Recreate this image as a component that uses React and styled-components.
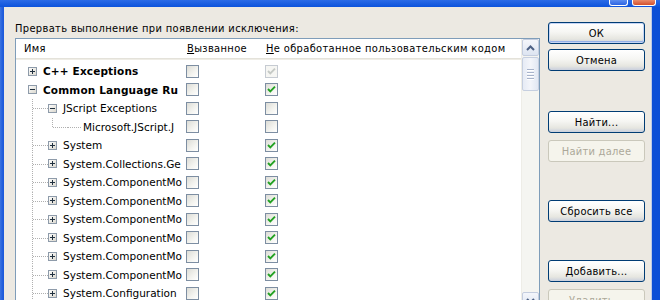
import React from 'react';
import styled, { createGlobalStyle } from 'styled-components';

const Global = createGlobalStyle`
  html, body { margin: 0; padding: 0; background: #ffffff; }
  body { font-family: "DejaVu Sans Condensed", "DejaVu Sans", sans-serif; }
`;

const Frame = styled.div`
  width: 660px;
  height: 300px;
  overflow: hidden;
  display: flex;
  flex-direction: column;
  background: linear-gradient(90deg, #3D74E0 0px, #1E5BDB 3px, #0D4FD6 100%);
`;

const TitleBar = styled.div`
  height: 7px;
  flex: none;
  display: flex;
  justify-content: flex-end;
  align-items: flex-start;
  gap: 4px;
  padding-right: 4px;
  background: linear-gradient(#2C6BE6, #0C53DC);
`;

const TitleButton = styled.div`
  width: ${(p) => p.$w}px;
  height: 5px;
  border: 1px solid #ffffff;
  border-top: none;
  border-radius: 0 0 3px 3px;
  background: ${(p) => p.$bg};
`;

const Body = styled.div`
  flex: 1;
  min-height: 0;
  display: flex;
  gap: 8px;
  margin: 0 8px 0 4px;
  padding: 15px 7px 0 11px;
  background: #ECE9E2;
  overflow: hidden;
  border-right: 1px solid #BFCBE6;
`;

const LeftColumn = styled.div`
  width: 525px;
  flex: none;
  display: flex;
  flex-direction: column;
`;

const Caption = styled.div`
  font-size: 11px;
  line-height: 13px;
  height: 13px;
  letter-spacing: 0.35px;
  color: #000;
  white-space: nowrap;
`;

const ListBox = styled.div`
  margin-top: 3px;
  height: 272px;
  flex: none;
  box-sizing: border-box;
  border: 1px solid #7F9DB9;
  background: #ffffff;
  display: flex;
  overflow: hidden;
`;

const ListMain = styled.div`
  flex: 1;
  min-width: 0;
  display: flex;
  flex-direction: column;
`;

const Header = styled.div`
  height: 19px;
  flex: none;
  display: flex;
  align-items: center;
  background: #ffffff;
  border-bottom: 1px solid #E4E2DA;
  box-shadow: 0 1px 0 #EFEDE6;
  margin-bottom: 3px;
  font-size: 11px;
  letter-spacing: 0.35px;
  color: #000;
`;

const HeadCell = styled.div`
  width: ${(p) => (p.$w ? `${p.$w}px` : 'auto')};
  flex: ${(p) => (p.$w ? 'none' : '1')};
  padding-left: ${(p) => p.$pad}px;
  box-sizing: border-box;
  white-space: nowrap;
  overflow: hidden;
`;

const Row = styled.div`
  height: 18.5px;
  flex: none;
  display: flex;
  align-items: center;
`;

const NameCell = styled.div`
  width: 167px;
  flex: none;
  height: 100%;
  display: flex;
  align-items: center;
  padding-left: 12px;
  box-sizing: border-box;
  overflow: hidden;
`;

const Gutter = styled.svg`
  width: ${(p) => p.$w}px;
  height: 100%;
  flex: none;
  overflow: visible;
`;

const NameText = styled.span`
  font-family: "DejaVu Sans", sans-serif;
  font-size: 10.5px;
  font-weight: ${(p) => (p.$bold ? 700 : 400)};
  letter-spacing: ${(p) => (p.$bold ? '0.15px' : '0px')};
  color: #000;
  white-space: nowrap;
`;

const CheckCell = styled.div`
  width: ${(p) => (p.$w ? `${p.$w}px` : 'auto')};
  flex: ${(p) => (p.$w ? 'none' : '1')};
  padding-left: 3px;
  box-sizing: border-box;
  display: flex;
  align-items: center;
`;

const CheckBox = styled.span`
  width: 13px;
  height: 13px;
  box-sizing: border-box;
  border: 1px solid ${(p) => (p.$dim ? '#C6CBD2' : '#7D8EA2')};
  background: ${(p) => (p.$dim ? '#F6F6F3' : 'linear-gradient(135deg, #DCDCD6 0%, #F4F4F0 60%, #FFFFFF 100%)')};
  display: flex;
  align-items: center;
  justify-content: center;
`;

const ScrollBar = styled.div`
  width: 17px;
  flex: none;
  display: flex;
  flex-direction: column;
  background: #F5F5F1;
  border-left: 1px solid #EEEDE7;
`;

const ScrollButton = styled.div`
  height: 17px;
  flex: none;
  box-sizing: border-box;
  border: 1px solid #C4CDDF;
  border-radius: 2px;
  background: linear-gradient(180deg, #F4F6FB 0%, #DDE4F1 100%);
  display: flex;
  align-items: center;
  justify-content: center;
`;

const Thumb = styled.div`
  height: 34px;
  margin-top: 1px;
  flex: none;
  box-sizing: border-box;
  border: 1px solid #C6CFE0;
  border-radius: 2px;
  background: linear-gradient(90deg, #E6EBF5 0%, #F3F5FA 50%, #E2E8F3 100%);
  display: flex;
  flex-direction: column;
  align-items: center;
  justify-content: center;
  gap: 2px;
`;

const Grip = styled.span`
  width: 7px;
  height: 1px;
  background: #A7B3CB;
  box-shadow: 0 1px 0 #FFFFFF;
`;

const Track = styled.div`
  flex: 1;
`;

const RightColumn = styled.div`
  width: 97px;
  flex: none;
  display: flex;
  flex-direction: column;
`;

const ButtonGroup = styled.div`
  display: flex;
  flex-direction: column;
  gap: ${(p) => p.$gap}px;
  margin-top: ${(p) => p.$top}px;
`;

const Button = styled.div`
  height: 22px;
  box-sizing: border-box;
  border: 1px solid ${(p) => (p.$disabled ? '#CAC8BB' : '#003C74')};
  border-radius: 3px;
  background: ${(p) =>
    p.$disabled
      ? '#F5F4EC'
      : 'linear-gradient(180deg, #FFFFFF 0%, #F6F6F3 45%, #E6E6E0 80%, #C9CFDD 100%)'};
  box-shadow: ${(p) =>
    p.$default ? 'inset 0 0 0 1px #C5D5F5, inset 0 -1px 0 1px #95B0E8' : 'none'};
  color: ${(p) => (p.$disabled ? '#ACA899' : '#000000')};
  font-size: 11px;
  letter-spacing: 0.25px;
  display: flex;
  align-items: center;
  justify-content: center;
  white-space: nowrap;
`;

function ExpandBox({ minus }) {
  return (
    <svg width="9" height="9" viewBox="0 0 9 9" style={{ flex: 'none' }}>
      <defs>
        <linearGradient id="eb" x1="0" y1="0" x2="1" y2="1">
          <stop offset="0" stopColor="#FFFFFF" />
          <stop offset="1" stopColor="#D9D6CC" />
        </linearGradient>
      </defs>
      <rect x="0.5" y="0.5" width="8" height="8" fill="url(#eb)" stroke="#8E9BAA" />
      <line x1="2" y1="4.5" x2="7" y2="4.5" stroke="#20303F" />
      {!minus && <line x1="4.5" y1="2" x2="4.5" y2="7" stroke="#20303F" />}
    </svg>
  );
}

function TreeLine({ kind, w = 20 }) {
  const dot = { stroke: '#B0B0B0', strokeDasharray: '1 1', strokeWidth: 1 };
  return (
    <Gutter $w={w} viewBox={`0 0 ${w} 18.5`} preserveAspectRatio="none">
      {kind === 'line' && <line x1="4.5" y1="0" x2="4.5" y2="18.5" {...dot} />}
      {kind === 'corner' && (
        <>
          <line x1="4.5" y1="0" x2="4.5" y2="9.5" {...dot} />
          <line x1="5" y1="9.5" x2={w} y2="9.5" {...dot} />
        </>
      )}
      {kind === 'tee' && (
        <>
          <line x1="4.5" y1="0" x2="4.5" y2="18.5" {...dot} />
          <line x1="5" y1="9.5" x2={w} y2="9.5" {...dot} />
        </>
      )}
      {kind === 'leaf' && <line x1="0" y1="9.5" x2="13" y2="9.5" {...dot} />}
    </Gutter>
  );
}

function Check({ checked, dim }) {
  return (
    <CheckBox $dim={dim}>
      {checked && (
        <svg width="9" height="9" viewBox="0 0 9 9">
          <path
            d="M1 4 L3.3 6.3 L8 1.6"
            fill="none"
            stroke={dim ? '#C5C9C5' : '#22A122'}
            strokeWidth="1.9"
          />
        </svg>
      )}
    </CheckBox>
  );
}

const rows = [
  { name: 'C++ Exceptions', exp: 'plus', bold: true, c2: true, dim: true, gut: [] },
  { name: 'Common Language Ru', exp: 'minus', bold: true, c2: true, gut: [] },
  { name: 'JScript Exceptions', exp: 'minus', c2: false, gut: ['tee'] },
  { name: 'Microsoft.JScript.J', exp: 'leaf', c2: false, gut: ['line', 'corner'] },
  { name: 'System', exp: 'plus', c2: true, gut: ['tee'] },
  { name: 'System.Collections.Ge', exp: 'plus', c2: true, gut: ['tee'] },
  { name: 'System.ComponentMo', exp: 'plus', c2: true, gut: ['tee'] },
  { name: 'System.ComponentMo', exp: 'plus', c2: true, gut: ['tee'] },
  { name: 'System.ComponentMo', exp: 'plus', c2: true, gut: ['tee'] },
  { name: 'System.ComponentMo', exp: 'plus', c2: true, gut: ['tee'] },
  { name: 'System.ComponentMo', exp: 'plus', c2: true, gut: ['tee'] },
  { name: 'System.ComponentMo', exp: 'plus', c2: true, gut: ['tee'] },
  { name: 'System.Configuration', exp: 'plus', c2: true, gut: ['tee'] },
  { name: 'System.Data', exp: 'plus', c2: true, gut: ['tee'] },
];

function TreeRow({ r }) {
  return (
    <Row>
      <NameCell>
        {r.gut.map((g, i) => (
          <TreeLine key={i} kind={g} />
        ))}
        {r.exp === 'leaf' ? (
          <TreeLine kind="leaf" w={15} />
        ) : (
          <>
            <ExpandBox minus={r.exp === 'minus'} />
            <Gutter $w={6} />
          </>
        )}
        <NameText $bold={r.bold}>{r.name}</NameText>
      </NameCell>
      <CheckCell $w={79}>
        <Check checked={false} />
      </CheckCell>
      <CheckCell>
        <Check checked={r.c2} dim={r.dim} />
      </CheckCell>
    </Row>
  );
}

export default function App() {
  return (
    <>
      <Global />
      <Frame>
        <TitleBar>
          <TitleButton $w={17} $bg="linear-gradient(#5C8DF0, #2D63E2)" />
          <TitleButton $w={22} $bg="linear-gradient(#E98A6B, #D2502E)" />
        </TitleBar>
        <Body>
          <LeftColumn>
            <Caption>Прервать выполнение при появлении исключения:</Caption>
            <ListBox>
              <ListMain>
                <Header>
                  <HeadCell $w={167} $pad={8}>Имя</HeadCell>
                  <HeadCell $w={79} $pad={4}>
                    <u>В</u>ызванное
                  </HeadCell>
                  <HeadCell $pad={4}>
                    <u>Н</u>е обработанное пользовательским кодом
                  </HeadCell>
                </Header>
                {rows.map((r, i) => (
                  <TreeRow key={i} r={r} />
                ))}
              </ListMain>
              <ScrollBar>
                <ScrollButton>
                  <svg width="9" height="6" viewBox="0 0 9 6">
                    <path d="M1 5 L4.5 1.5 L8 5" fill="none" stroke="#4D6185" strokeWidth="2" />
                  </svg>
                </ScrollButton>
                <Thumb>
                  <Grip />
                  <Grip />
                  <Grip />
                  <Grip />
                </Thumb>
                <Track />
                <ScrollButton>
                  <svg width="9" height="6" viewBox="0 0 9 6">
                    <path d="M1 1 L4.5 4.5 L8 1" fill="none" stroke="#4D6185" strokeWidth="2" />
                  </svg>
                </ScrollButton>
              </ScrollBar>
            </ListBox>
          </LeftColumn>
          <RightColumn>
            <ButtonGroup $gap={5} $top={0}>
              <Button $default>ОК</Button>
              <Button>Отмена</Button>
            </ButtonGroup>
            <ButtonGroup $gap={7} $top={40}>
              <Button>Найти...</Button>
              <Button $disabled>Найти далее</Button>
            </ButtonGroup>
            <ButtonGroup $gap={7} $top={38}>
              <Button>Сбросить все</Button>
            </ButtonGroup>
            <ButtonGroup $gap={7} $top={38}>
              <Button>Добавить...</Button>
              <Button $disabled>Удалить...</Button>
            </ButtonGroup>
          </RightColumn>
        </Body>
      </Frame>
    </>
  );
}
